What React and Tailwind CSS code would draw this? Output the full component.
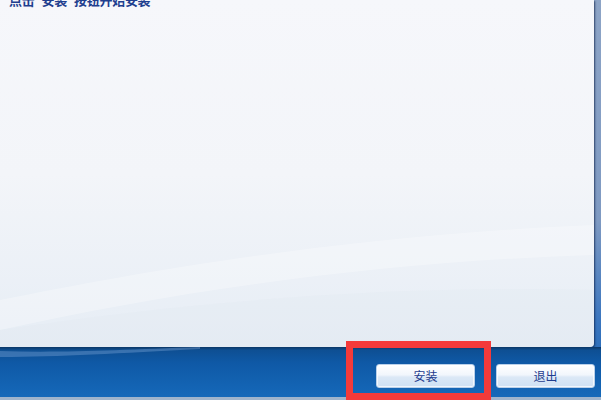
import React from "react";

function Btn({ children }) {
  return (
    <button
      className="w-[99px] h-[24px] rounded-[3px] border border-[#b9d0ea] bg-[linear-gradient(to_bottom,#ffffff_0%,#f1f6fc_45%,#dbe8f6_55%,#cfe1f4_100%)] shadow-[inset_0_0_0_1px_rgba(255,255,255,0.7)] text-[12px] leading-[22px] text-[#1f3d8e] flex items-center justify-center"
      style={{ fontFamily: '"Noto Sans CJK SC", "Noto Sans", sans-serif' }}
    >
      {children}
    </button>
  );
}

export default function App() {
  return (
    <div className="relative w-[601px] h-[400px] overflow-hidden bg-[linear-gradient(to_bottom,#8da4c6_0%,#7f9ac2_55%,#3b76bf_80%,#1563b3_100%)] flex flex-col">
      <div className="flex h-[347px]">
        <div className="relative flex-1 mr-[7px] rounded-br-[4px] bg-[linear-gradient(to_bottom,#f6f7fb_0%,#f3f5f9_50%,#e6edf5_100%)] shadow-[1px_1px_2px_rgba(10,30,70,0.7)] overflow-hidden">
          <svg className="absolute inset-0" width="594" height="347" viewBox="0 0 594 347">
            <path d="M0 300 C 150 270, 350 235, 594 225 L 594 255 C 380 262, 180 290, 0 330 Z" fill="#ffffff" opacity="0.28" />
            <path d="M0 330 C 200 300, 400 285, 594 290 L 594 347 L 0 347 Z" fill="#dfe7f1" opacity="0.25" />
          </svg>
          <div
            className="relative -mt-[7px] pl-[9px] text-[13px] leading-[13px] font-bold text-[#1f3f8f] whitespace-nowrap tracking-[-0.3px]"
            style={{ fontFamily: '"Noto Sans CJK SC", "Noto Sans", sans-serif' }}
          >
            点击"安装"按钮开始安装
          </div>
        </div>
      </div>
      <div className="relative flex-1 flex flex-col bg-[linear-gradient(to_bottom,#0b3767_0%,#0e4f93_6%,#0f59a6_30%,#166abb_100%)]">
        <svg className="absolute left-0 top-0" width="200" height="12" viewBox="0 0 200 12">
          <path d="M0 4 C 60 6, 120 3, 200 0 L 200 2 C 120 6, 60 10, 0 10 Z" fill="#6f9bd0" opacity="0.45" />
        </svg>
        <div className="relative flex-1 flex justify-end items-start gap-[21px] pt-[17px] pr-[6px]">
          <Btn>安装</Btn>
          <Btn>退出</Btn>
        </div>
        <div className="h-[3px] bg-[#9fb4cc]" />
      </div>
      <div className="absolute left-[346px] top-[341px] w-[145px] h-[59px] border-[7px] border-[#f43a3a]" />
    </div>
  );
}
